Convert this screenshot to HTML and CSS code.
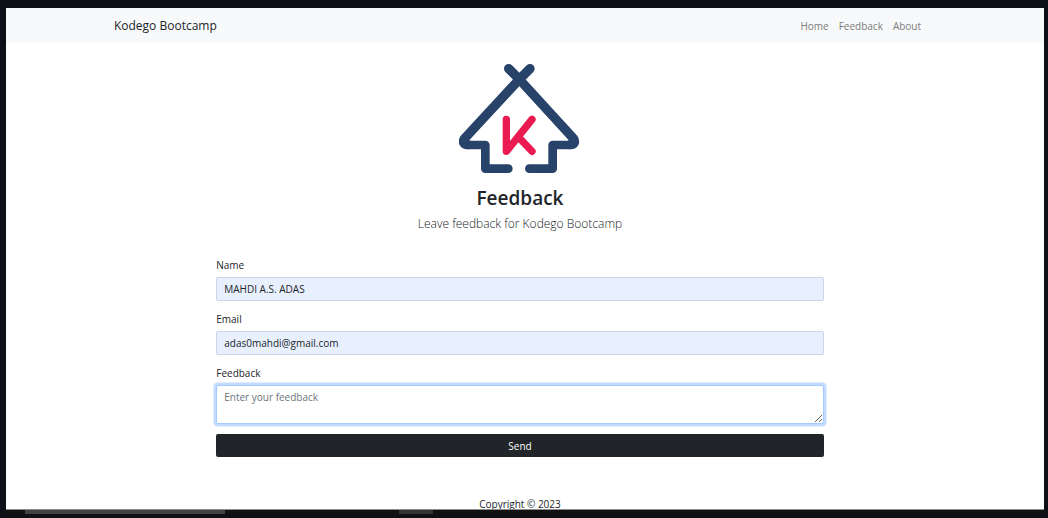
FILE: index.html
```html
<!DOCTYPE html>
<html lang="en">
<head>
<meta charset="utf-8">
<meta name="viewport" content="width=device-width, initial-scale=1">
<title>Feedback</title>
<link rel="stylesheet" href="styles.css">
</head>
<body>
<div class="page">
  <header class="navbar">
    <div class="container navbar-inner">
      <a class="brand" href="#">Kodego Bootcamp</a>
      <nav class="nav">
        <a href="#">Home</a>
        <a href="#">Feedback</a>
        <a href="#">About</a>
      </nav>
    </div>
  </header>
  <main class="container main">
    <svg class="logo" viewBox="42 42 363 327" fill="none" stroke-linecap="round" stroke-linejoin="round" aria-hidden="true">
      <g stroke="#284369" stroke-width="26">
        <path d="M68 285H121V356H190M376 285H323V356H253"/>
        <path stroke-width="28" d="M255 56L223 88L59 265Q54 272 56 278Q59 284 68 284"/>
        <path stroke-width="28" d="M191 56L223 88L385 265Q390 272 388 278Q385 284 376 284"/>
      </g>
      <path stroke="#e91b50" stroke-width="22" d="M184 208V304L261 208M223 264L261 304"/>
    </svg>
    <h1 class="title">Feedback</h1>
    <p class="lead">Leave feedback for Kodego Bootcamp</p>
    <form class="form">
      <div class="field">
        <label for="name">Name</label>
        <input class="control filled" id="name" type="text" value="MAHDI A.S. ADAS">
      </div>
      <div class="field">
        <label for="email">Email</label>
        <input class="control filled" id="email" type="email" value="adas0mahdi@gmail.com">
      </div>
      <div class="field">
        <label for="feedback">Feedback</label>
        <textarea class="control message" id="feedback" placeholder="Enter your feedback"></textarea>
      </div>
      <button class="send" type="submit">Send</button>
    </form>
  </main>
  <footer class="footer">Copyright © 2023</footer>
</div>
<div class="strip"><span class="task task-wide"></span><span class="task"></span></div>
</body>
</html>
```
FILE: styles.css
```css
* { box-sizing: border-box; }

body {
  display: flex;
  flex-direction: column;
  height: 100vh;
  margin: 0;
  padding: 8px 4px 4px 6px;
  overflow: hidden;
  background: #0d1017;
  color: #212529;
  font: 10px/16px "Open Sans", "Noto Sans", sans-serif;
}

.page {
  flex: 1;
  min-height: 0;
  overflow: hidden;
  border-bottom: 1px solid #8c8e8d;
  background: #fff;
}

.navbar { padding-right: 10px; background: #f8f9fa; }

.container { width: 79%; margin: 0 auto; }

.navbar-inner {
  display: flex;
  align-items: center;
  justify-content: space-between;
  height: 35px;
}

.navbar a { text-decoration: none; }
.brand { color: #212529; font-size: 12px; }
.nav { display: flex; gap: 10px; padding-right: 5px; }
.nav a { color: #7b7c7d; }

.main {
  display: flex;
  flex-direction: column;
  align-items: center;
  padding: 21px 10px 0 0;
}

.logo { width: 121px; height: 109px; }

.title {
  margin: 12px 0 0;
  font-size: 19px;
  font-weight: 600;
  line-height: 26px;
}

.lead {
  margin: 3px 0 23px;
  font-size: 12px;
  font-weight: 300;
  line-height: 20px;
}

.form { width: 75%; }
.field { margin-bottom: 10px; }
.field label { display: block; margin-bottom: 4px; }

.control {
  display: block;
  width: 100%;
  height: 24px;
  padding: 3px 7px;
  border: 1px solid #ced4da;
  border-radius: 2px;
  color: #212529;
  font: inherit;
}

.filled { border-color: #ccd6e8; background: #e8f0fe; }

.message {
  height: 39px;
  border-color: #a5c9fe;
  outline: 0;
  box-shadow: 0 0 0 2px #c2dbfe, 0 0 0 3px #e0ecff;
  resize: vertical;
}

.message::placeholder { color: #6c757d; opacity: 1; }

.send {
  display: block;
  width: 100%;
  height: 23px;
  padding: 0;
  border: 0;
  border-radius: 2px;
  background: #212529;
  color: #fff;
  font: inherit;
}

.footer { padding: 39px 10px 0 0; text-align: center; }

.strip { display: flex; gap: 174px; height: 4px; padding-left: 19px; background: #111; }
.task { width: 34px; background: #333; }
.task-wide { width: 200px; background: #414342; }
```
